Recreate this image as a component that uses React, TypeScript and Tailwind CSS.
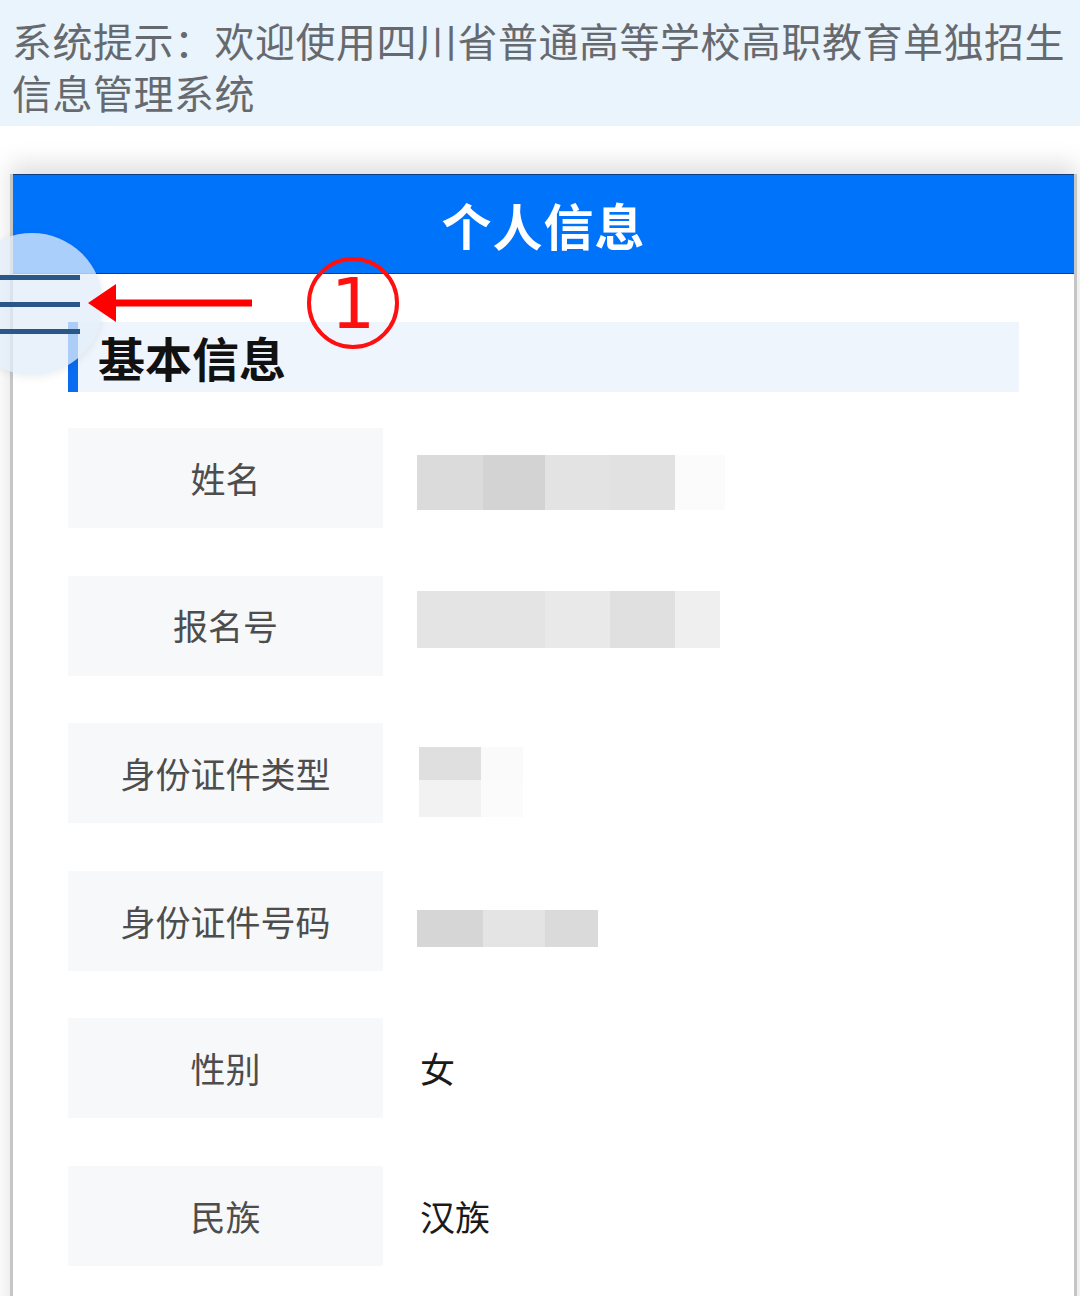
import React from "react";

type Cell = { w: number; c: string };

const font = "font-['Noto_Sans_CJK_SC','Noto_Sans',sans-serif]";

function Blocks({ cells, h }: { cells: Cell[]; h: number }) {
  return (
    <div className="flex" style={{ height: h }}>
      {cells.map((cell, i) => (
        <div key={i} style={{ width: cell.w, background: cell.c }} />
      ))}
    </div>
  );
}

function Row({ label, children, align = "items-center" }: { label: string; children: React.ReactNode; align?: string }) {
  return (
    <div className={`flex ${align}`}>
      <div className="w-[315px] h-[100px] shrink-0 bg-[#f7f8fa] flex items-center justify-center text-[35px] text-[#4d4d4d]">
        {label}
      </div>
      <div className="ml-[34px] text-[35px] text-[#1a1a1a]">{children}</div>
    </div>
  );
}

export default function App() {
  return (
    <div className={`relative w-[1080px] h-[1296px] overflow-hidden bg-white ${font}`}>
      {/* system notice */}
      <div className="h-[126px] bg-[#eaf4fd] pl-3 pr-1 pt-[14px] text-[40px] leading-[52px] tracking-[0.5px] text-[#666a6e]">
        系统提示：欢迎使用四川省普通高等学校高职教育单独招生信息管理系统
      </div>

      <div className="pt-12">
        <div className="ml-[10px] mr-[3px] h-[1200px] border-x-[3px] border-[#c6c6c6] shadow-[0_-10px_22px_rgba(0,0,0,0.13)]">
          <div className="h-[100px] bg-[#0073fb] border-y border-[#0d3f86] flex items-center justify-center text-[50px] font-bold text-white tracking-[1px]">
            个人信息
          </div>

          <div className="px-[55px] pt-12">
            <div className="h-[70px] bg-[#eef5fd] flex items-center">
              <div className="w-[10px] h-full bg-[#0a6cf0]" />
              <span className="ml-5 text-[47px] font-bold text-[#111]">基本信息</span>
            </div>

            <div className="mt-9 flex flex-col gap-[47.6px]">
              <Row label="姓名" align="items-start">
                <div className="mt-[27px]">
                  <Blocks h={55} cells={[{ w: 66, c: "#dbdbdb" }, { w: 62, c: "#d3d3d3" }, { w: 65, c: "#e3e3e3" }, { w: 65, c: "#e1e1e1" }, { w: 50, c: "#fbfbfb" }]} />
                </div>
              </Row>
              <Row label="报名号" align="items-start">
                <div className="mt-[15px]">
                  <Blocks h={57} cells={[{ w: 66, c: "#e4e4e4" }, { w: 62, c: "#e4e4e4" }, { w: 65, c: "#e9e9e9" }, { w: 65, c: "#e0e0e0" }, { w: 45, c: "#efefef" }]} />
                </div>
              </Row>
              <Row label="身份证件类型" align="items-start">
                <div className="mt-[24px] ml-[2px]">
                  <Blocks h={33} cells={[{ w: 62, c: "#dfdfdf" }, { w: 42, c: "#fafafa" }]} />
                  <Blocks h={37} cells={[{ w: 62, c: "#f2f2f2" }, { w: 42, c: "#fbfbfb" }]} />
                </div>
              </Row>
              <Row label="身份证件号码" align="items-start">
                <div className="mt-[39px]">
                  <Blocks h={37} cells={[{ w: 66, c: "#d6d6d6" }, { w: 62, c: "#e4e4e4" }, { w: 53, c: "#dadada" }]} />
                </div>
              </Row>
              <Row label="性别">
                <span className="ml-[3px]">女</span>
              </Row>
              <Row label="民族">
                <span className="ml-[3px]">汉族</span>
              </Row>
            </div>
          </div>
        </div>
      </div>

      {/* floating menu button */}
      <div className="absolute left-[-39px] top-[233px] w-[142px] h-[142px] rounded-full bg-[rgba(226,237,250,0.75)] shadow-[0_2px_8px_rgba(0,0,0,0.08)]" />
      <div className="absolute left-0 top-[275px] w-[80px] flex flex-col gap-[22px]">
        <div className="h-[5px] bg-[#2b5688]" />
        <div className="h-[5px] bg-[#2b5688]" />
        <div className="h-[5px] bg-[#2b5688]" />
      </div>

      {/* red annotation arrow */}
      <svg className="absolute left-[86px] top-[282px]" width="170" height="42" viewBox="0 0 170 42">
        <path d="M2 21 L30 2 L30 40 Z" fill="#ff0000" />
        <rect x="26" y="17.5" width="140" height="7" fill="#ff0000" />
      </svg>

      {/* circled number */}
      <div className="absolute left-[307px] top-[257px] w-[92px] h-[92px] rounded-full border-[4px] border-[#ff1010] flex items-center justify-center">
        <span className="font-['DejaVu_Sans',sans-serif] text-[70px] leading-none text-[#ff1010] mt-[1px]">1</span>
      </div>
    </div>
  );
}
